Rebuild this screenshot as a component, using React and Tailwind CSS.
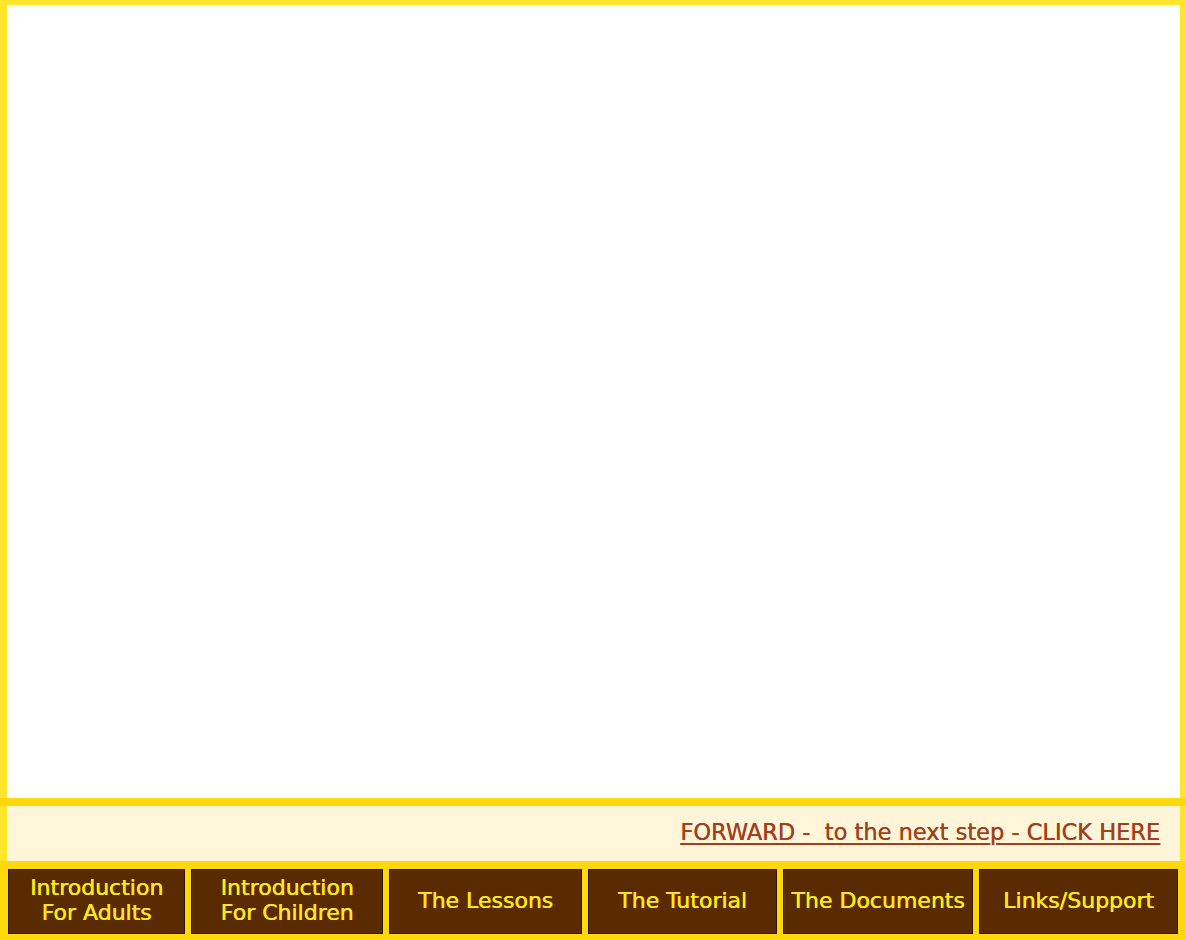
import React from 'react';

const buttons = [
  { lines: ['Introduction', 'For Adults'], w: 'w-[177px]' },
  { lines: ['Introduction', 'For Children'], w: 'w-[192px]' },
  { lines: ['The Lessons'], w: 'w-[193px]' },
  { lines: ['The Tutorial'], w: 'w-[189px]' },
  { lines: ['The Documents'], w: 'w-[190px]' },
  { lines: ['Links/Support'], w: 'w-[199px]' },
];

function NavButton({ lines, w }) {
  return (
    <a
      href="#"
      className={`${w} h-[65px] shrink-0 flex flex-col items-center justify-center pb-[3px] bg-[#5a2b00] border border-[#2e1500] text-[#ffe81a] text-[22px] leading-[25px] no-underline whitespace-nowrap [text-shadow:0.5px_0_0_#ffe81a]`}
    >
      {lines.map((line) => (
        <span key={line}>{line}</span>
      ))}
    </a>
  );
}

export default function App() {
  return (
    <div
      className="w-[1186px] h-[940px] bg-[#ffe52c] flex flex-col overflow-hidden"
      style={{ fontFamily: '"DejaVu Sans", "Liberation Sans", sans-serif' }}
    >
      <div className="h-[5px] shrink-0" />
      <div className="h-[793px] shrink-0 ml-[7px] mr-[6px] bg-white" />
      <div className="h-[8px] shrink-0 bg-[#ffd80c]" />
      <div className="h-[55px] shrink-0 ml-[7px] mr-[6px] bg-[#fff6da] flex items-center justify-end pr-[20px] pb-[2px]">
        <a
          href="#"
          className="text-[22.5px] text-[#a3401c] underline underline-offset-[3px] decoration-[1.5px] whitespace-pre [text-shadow:0.4px_0_0_#a3401c]"
        >
          FORWARD -  to the next step - CLICK HERE
        </a>
      </div>
      <div className="flex-1 bg-[#ffd80c] flex gap-[6px] pl-[8px] pr-[8px] pt-[8px] pb-[6px]">
        {buttons.map((b) => (
          <NavButton key={b.lines.join(' ')} {...b} />
        ))}
      </div>
    </div>
  );
}
